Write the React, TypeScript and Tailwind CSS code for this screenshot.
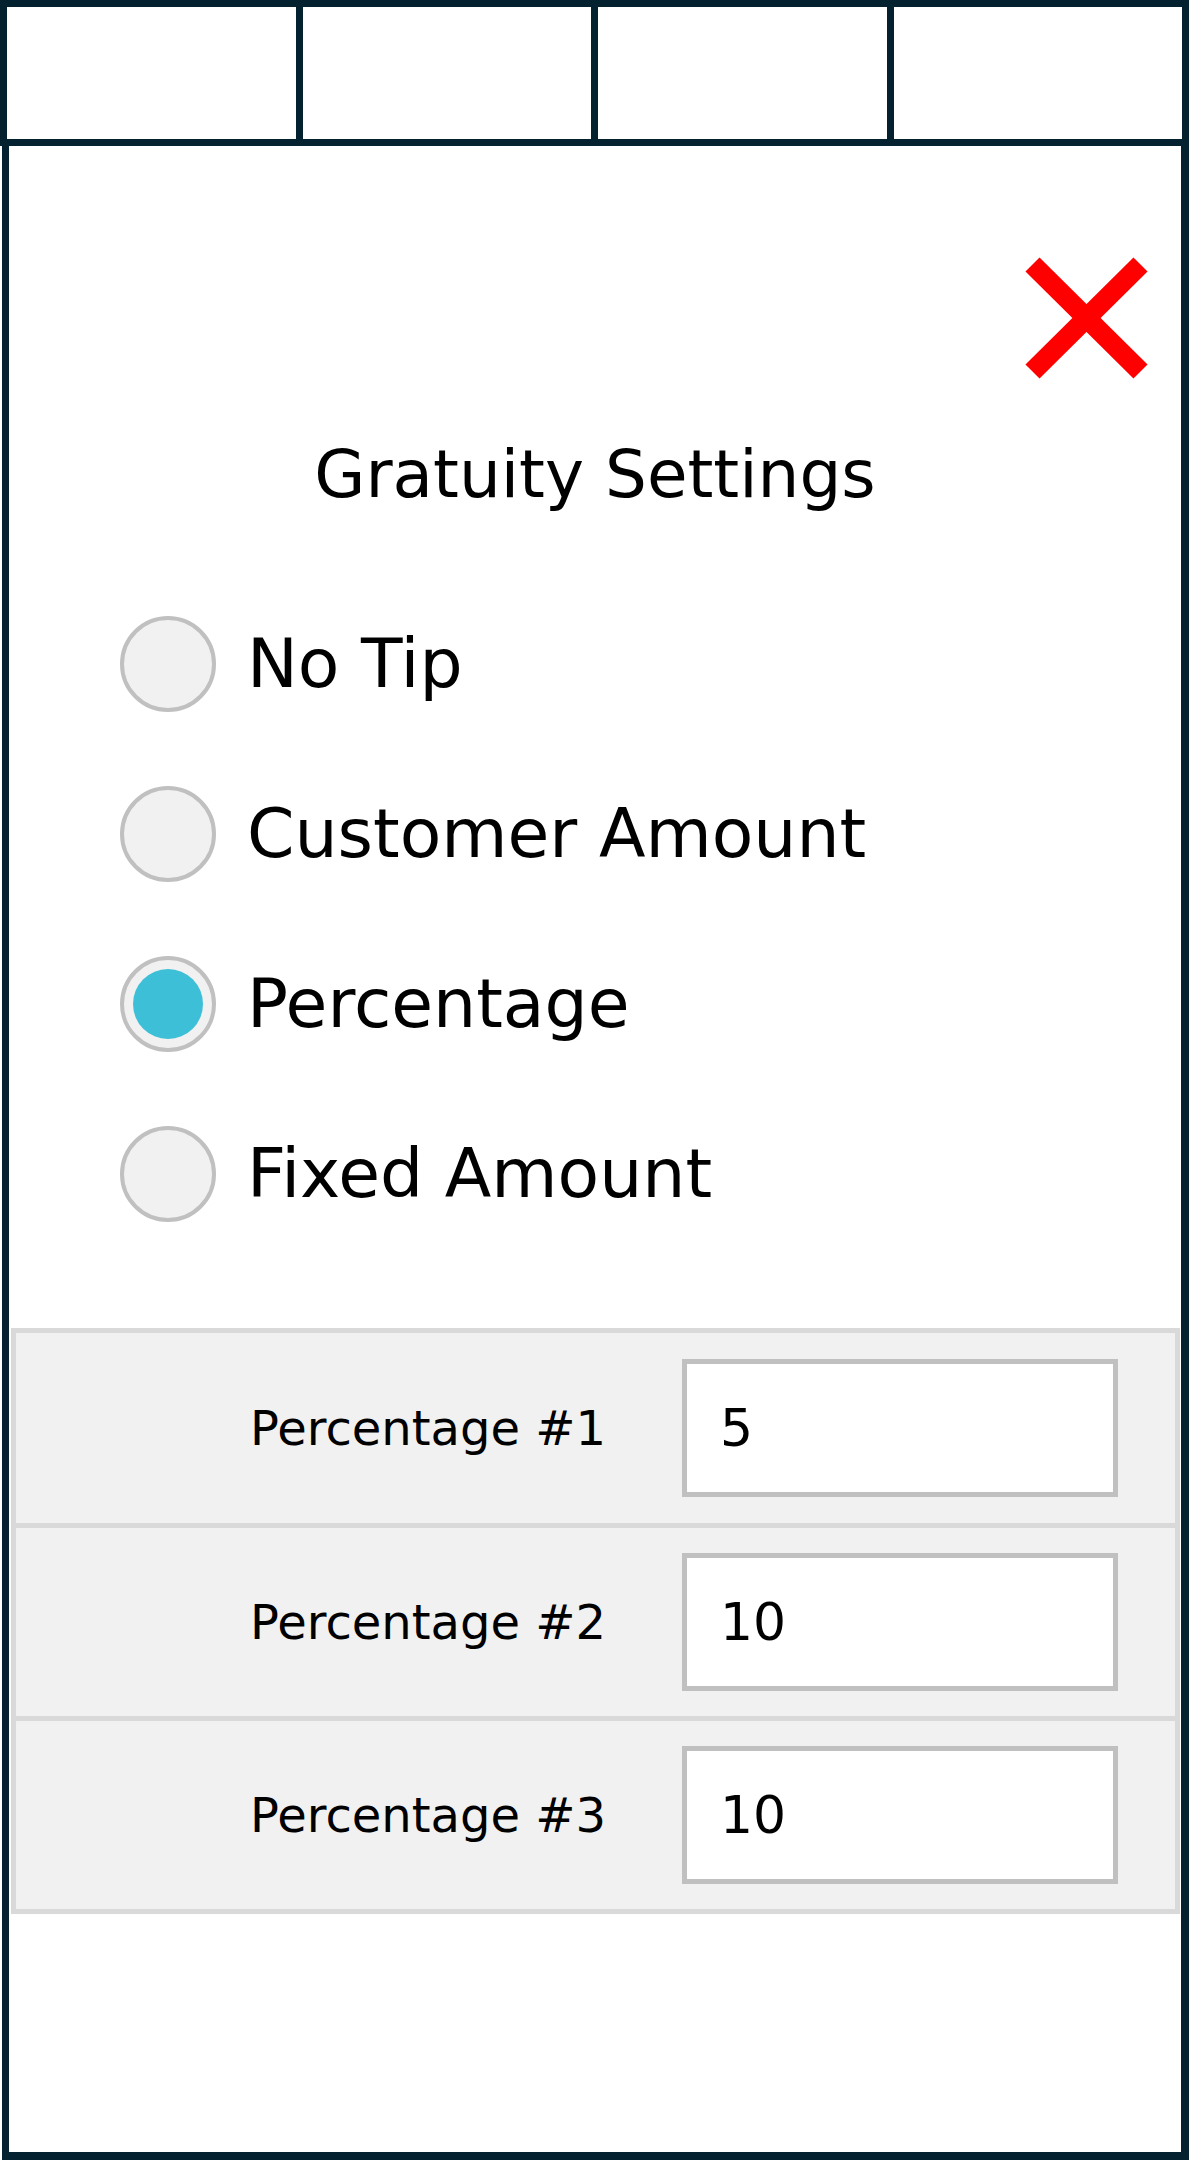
import { useState } from 'react';

const options = ['No Tip', 'Customer Amount', 'Percentage', 'Fixed Amount'];

const percentages = [
  { label: 'Percentage #1', value: '5' },
  { label: 'Percentage #2', value: '10' },
  { label: 'Percentage #3', value: '10' },
];

function CloseIcon() {
  return (
    <svg width="123" height="122" viewBox="0 0 123 122">
      <line x1="7.5" y1="7.5" x2="115.5" y2="114.5" stroke="#ff0000" strokeWidth="20" />
      <line x1="115.5" y1="7.5" x2="7.5" y2="114.5" stroke="#ff0000" strokeWidth="20" />
    </svg>
  );
}

function Radio({ checked }: { checked: boolean }) {
  return (
    <span className="flex h-[96px] w-[96px] shrink-0 items-center justify-center rounded-full border-4 border-[#c0c0c0] bg-[#f1f1f1]">
      {checked && <span className="h-[70px] w-[70px] rounded-full bg-[#3cbfd7]" />}
    </span>
  );
}

export default function App() {
  const [selected, setSelected] = useState('Percentage');

  return (
    <div className="w-[1189px] bg-white font-['DejaVu_Sans',sans-serif] text-black">
      {/* top tab strip */}
      <div className="grid h-[146px] grid-cols-4 gap-[7px] bg-[#04212f] p-[7px]">
        <div className="bg-white" />
        <div className="bg-white" />
        <div className="bg-white" />
        <div className="bg-white" />
      </div>

      <div className="ml-[2px] flex h-[2014px] flex-col border-b-[8px] border-l-[7px] border-r-[8px] border-[#04212f]">
        <div className="mt-[111px] flex justify-end pr-[33px]">
          <button onClick={() => setSelected('')} className="block">
            <CloseIcon />
          </button>
        </div>

        <h1 className="mt-[63px] text-center text-[66px] leading-none font-normal">Gratuity Settings</h1>

        <div className="mt-[108px] flex flex-col gap-[74px] pl-[111px]">
          {options.map((opt) => (
            <label key={opt} className="flex cursor-pointer items-center gap-[31px]" onClick={() => setSelected(opt)}>
              <Radio checked={selected === opt} />
              <span className="text-[68px] leading-none">{opt}</span>
            </label>
          ))}
        </div>

        <div className="mt-[106px] ml-[2px] mr-[1px] border-[5px] border-[#d9d9d9] bg-[#f1f1f1]">
          {percentages.map((p, i) => (
            <div
              key={p.label}
              className={`flex items-center pl-[234px] ${i > 0 ? 'h-[193px] border-t-[5px] border-[#d9d9d9]' : 'h-[190px]'}`}
            >
              <span className="w-[432px] shrink-0 text-[48px] leading-none">{p.label}</span>
              <input
                readOnly
                value={p.value}
                className="h-[138px] w-[436px] border-[5px] border-[#c0c0c0] bg-white pl-[33px] text-[52px] text-black outline-none"
              />
            </div>
          ))}
        </div>
      </div>
    </div>
  );
}
